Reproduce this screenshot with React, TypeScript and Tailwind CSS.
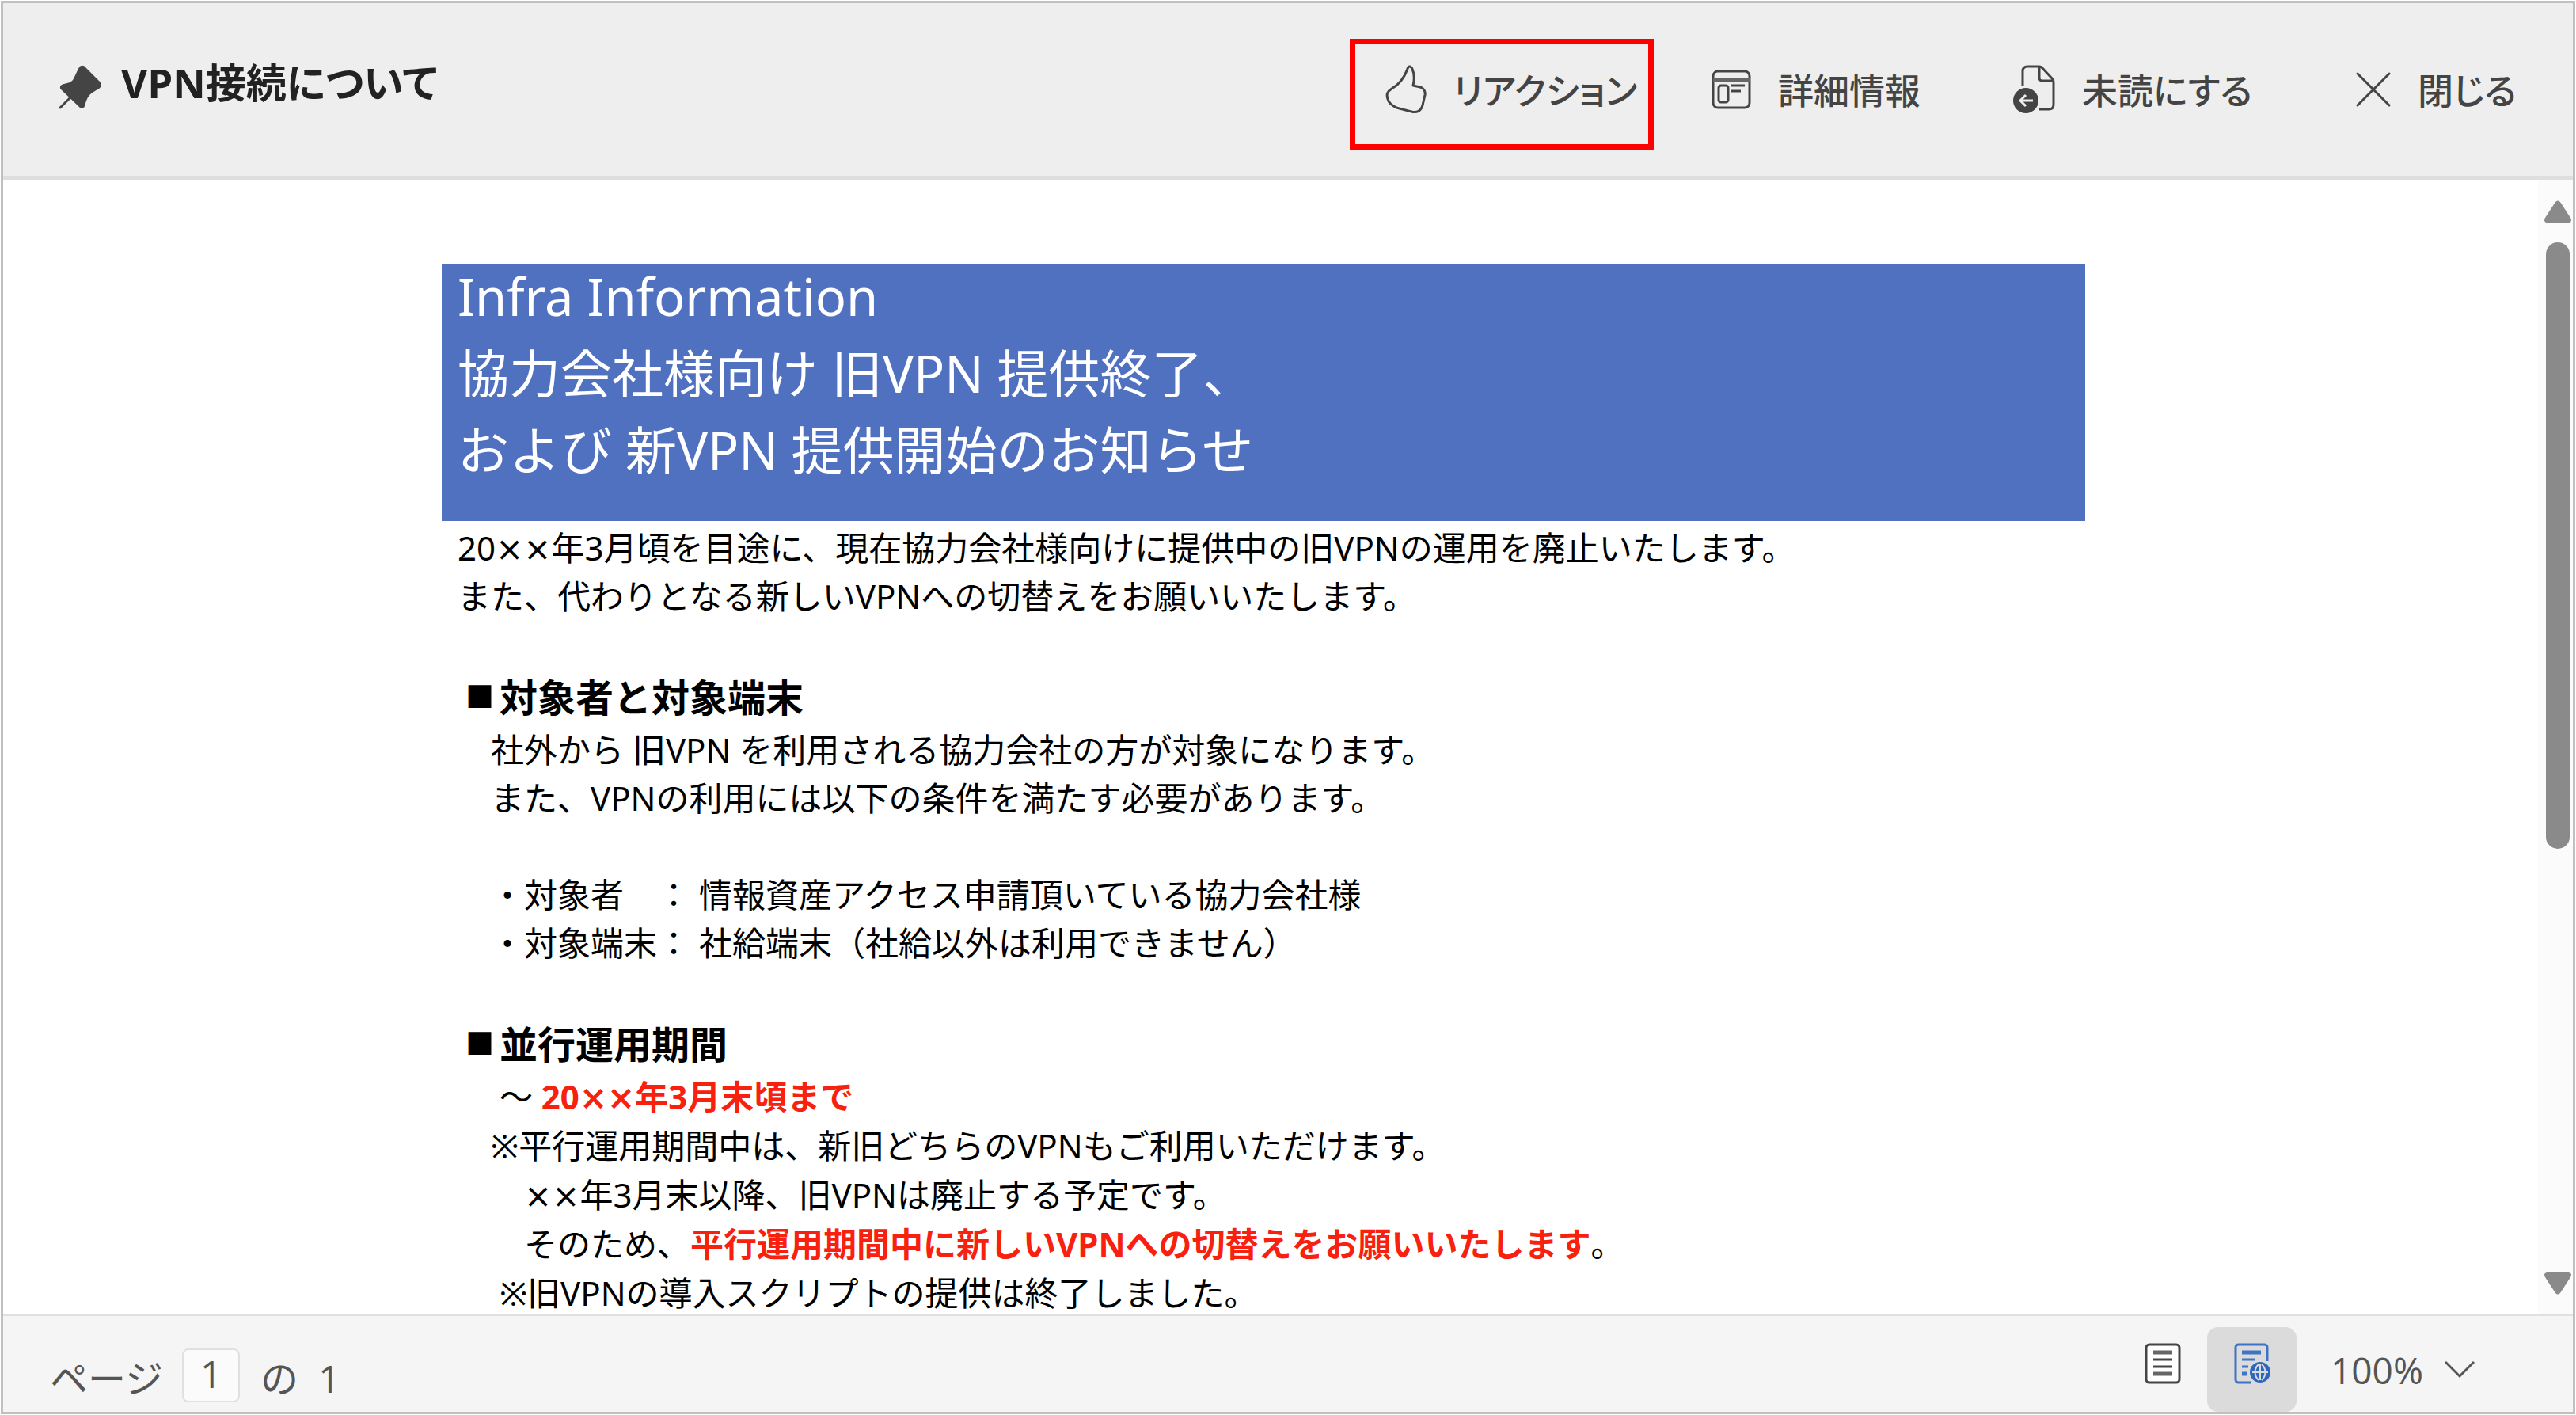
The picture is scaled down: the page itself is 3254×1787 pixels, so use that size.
import { useState } from 'react';
import type { ReactNode } from 'react';

function PinIcon() {
    return (
        <svg className="w-[54px] h-14 shrink-0" viewBox="0 0 54 56" fill="#444444" aria-hidden="true">
            <path d="M25 3c2-3 6-3 8 0l18 18c3 3 2 7-1 9-5 3-11 6-14 11-2 4-3 7-4 11-1 3-5 4-7 1L2 31c-2-2-1-5 1-6 5-2 11-2 14-6 3-5 5-11 8-16z" />
            <path d="M14 41L1 54" stroke="#444444" strokeWidth="3" strokeLinecap="round" />
        </svg>
    );
}

function ThumbIcon() {
    return (
        <svg className="w-[52px] h-[62px] shrink-0" viewBox="0 0 52 62" fill="none" stroke="#444444" strokeWidth="3" strokeLinejoin="round" aria-hidden="true">
            <path d="M28 5c1-4 4-4 6 0 3 7 3 13 1 21l9 2c4 1 7 5 6 10l-3 13c-2 7-7 10-14 8L14 54C8 51 4 48 3 43c-2-6-1-9 5-13 9-5 16-14 20-25z" />
        </svg>
    );
}

function DetailIcon() {
    return (
        <svg className="w-[50px] h-[52px] shrink-0" viewBox="0 0 50 52" fill="none" stroke="#444444" strokeWidth="3" aria-hidden="true">
            <rect x="2" y="3" width="46" height="46" rx="6" />
            <path d="M2 14h46" strokeWidth="5" stroke="#666666" />
            <rect x="9" y="21" width="12" height="21" rx="3" />
            <path d="M25 21h17M25 28h12" />
        </svg>
    );
}

function UnreadIcon() {
    return (
        <svg className="w-[54px] h-[62px] shrink-0" viewBox="0 0 54 62" fill="none" stroke="#444444" strokeWidth="3" aria-hidden="true">
            <path d="M13 27V8c0-4 2-6 6-6h15c2 0 3 1 4 2l12 13c1 1 2 3 2 5v28c0 4-2 6-6 6H34" />
            <path d="M34 3v13c0 3 1 4 4 4h13" />
            <circle cx="17" cy="45" r="16" fill="#444444" stroke="none" />
            <path d="M26 45H11M17 38l-7 7 7 7" stroke="#eeeeee" />
        </svg>
    );
}

function CloseIcon() {
    return (
        <svg className="w-11 h-11 shrink-0" viewBox="0 0 44 44" fill="none" stroke="#444444" strokeWidth="3" strokeLinecap="round" aria-hidden="true">
            <path d="M2 2l40 40M42 2L2 42" />
        </svg>
    );
}

function PageIcon() {
    return (
        <svg className="w-[46px] h-[52px]" viewBox="0 0 46 52" fill="none" stroke="#444444" strokeWidth="3" aria-hidden="true">
            <rect x="2" y="2" width="42" height="48" rx="4" fill="#ffffff" />
            <path d="M11 12h24M11 39h24" strokeWidth="5" stroke="#666666" />
            <path d="M11 21h24M11 30h24" />
        </svg>
    );
}

function WebPageIcon() {
    return (
        <svg className="w-[46px] h-[52px]" viewBox="0 0 46 52" fill="none" stroke="#3f74c4" strokeWidth="3" aria-hidden="true">
            <path d="M22 50H6c-3 0-4-1-4-4V6c0-3 1-4 4-4h32c3 0 4 1 4 4v17" />
            <path d="M10 12h24" strokeWidth="5" />
            <path d="M10 21h16M10 30h8" />
            <path d="M10 39h7" strokeWidth="5" />
            <circle cx="33" cy="37" r="13" fill="#2f66bd" stroke="none" />
            <path d="M23 37h20M33 27v20M31 27c-6 6-6 14 0 20M35 27c6 6 6 14 0 20" stroke="#dbdbdb" strokeWidth="2" />
        </svg>
    );
}

const actions = [
    { label: 'リアクション', icon: <ThumbIcon />, className: 'w-[384px] pl-[38px] border-[7px] border-[#ff0000]' },
    { label: '詳細情報', icon: <DetailIcon />, className: 'w-[334px] pl-[27px]' },
    { label: '未読にする', icon: <UnreadIcon />, className: 'w-[388px] pl-[27px]' },
    { label: '閉じる', icon: <CloseIcon />, className: 'w-[270px] pl-[27px]' },
];

// The multiplication sign is used as a wide placeholder digit
function Xx() {
    return <span className="leading-none font-['DejaVu_Sans',sans-serif]">××</span>;
}

function Heading({ children }: { children: ReactNode }) {
    return (
        <h2 className="flex items-center h-[72px] pl-[30px] text-[48px] font-bold">
            <span className="w-[43px] text-[36px]">■</span>
            {children}
        </h2>
    );
}

function Arrow({ down }: { down?: boolean }) {
    return (
        <svg className="w-[34px] h-7 shrink-0" viewBox="0 0 34 28" fill="#8a8a8a" aria-hidden="true">
            {down ? (
                <path d="M4 0h26c4 0 5 3 3 6L20 26c-2 2-4 2-6 0L1 6C-1 3 0 0 4 0z" />
            ) : (
                <path d="M4 28h26c4 0 5-3 3-6L20 2c-2-2-4-2-6 0L1 22c-2 3-1 6 3 6z" />
            )}
        </svg>
    );
}

export default function App() {
    const [page, setPage] = useState('1');
    const [zoom, setZoom] = useState('100%');

    return (
        <div className="h-screen p-px bg-white font-['Noto_Sans','Noto_Sans_CJK_JP',sans-serif]" lang="ja">
            <div className="h-full flex flex-col border-[3px] border-[#c0c0c0]">
                <header className="flex justify-between h-[223px] shrink-0 pl-[71px] pr-[31px] bg-[#eeeeee] border-b-[5px] border-[#dedede] [font-feature-settings:'palt']">
                    <div className="flex items-center gap-6 h-[200px] text-[#222222]">
                        <div className="pt-3"><PinIcon /></div>
                        <h1 className="text-[51px] leading-[72px] font-bold font-['Open_Sans','Noto_Sans_CJK_JP',sans-serif]">VPN接続について</h1>
                    </div>
                    <nav className="flex items-start gap-[46px] pt-[45px] text-[#444444]">
                        {actions.map(action => (
                            <button
                                key={action.label}
                                className={`flex items-center gap-[34px] h-[140px] pb-3 text-[45px] font-medium whitespace-nowrap ${action.className}`}
                            >
                                {action.icon}
                                <span className="leading-[64px] font-['Noto_Sans_CJK_JP',sans-serif]">{action.label}</span>
                            </button>
                        ))}
                    </nav>
                </header>

                <div className="flex flex-1 min-h-0 bg-white">
                    <main className="flex-1 min-w-0 overflow-hidden pt-[107px] pr-[18px]">
                        <article className="max-w-[2076px] mx-auto text-[42px] leading-[61px] text-black whitespace-pre">
                            <h2 className="flex flex-col justify-center h-[324px] pl-5 pb-[50px] bg-[#5070c0] text-white text-[65px] leading-[97px]">
                                <span>Infra Information</span>
                                <span>協力会社様向け 旧VPN 提供終了、</span>
                                <span>および 新VPN 提供開始のお知らせ</span>
                            </h2>

                            <div className="pt-[3px] pl-5">
                                <p>20<Xx />年3月頃を目途に、現在協力会社様向けに提供中の旧VPNの運用を廃止いたします。</p>
                                <p>また、代わりとなる新しいVPNへの切替えをお願いいたします。</p>
                            </div>

                            <section className="pt-[61px]">
                                <Heading>対象者と対象端末</Heading>
                                <div className="pl-[62px]">
                                    <p>社外から 旧VPN を利用される協力会社の方が対象になります。</p>
                                    <p>また、VPNの利用には以下の条件を満たす必要があります。</p>
                                    <ul className="pt-[61px]">
                                        <li>{'・対象者　： 情報資産アクセス申請頂いている協力会社様'}</li>
                                        <li>{'・対象端末： 社給端末（社給以外は利用できません）'}</li>
                                    </ul>
                                </div>
                            </section>

                            <section className="pt-[61px]">
                                <Heading>並行運用期間</Heading>
                                <div className="pl-[62px] leading-[62px]">
                                    <p>{' 〜 '}<strong className="text-[#f8200f]">20<Xx />年3月末頃まで</strong></p>
                                    <p>※平行運用期間中は、新旧どちらのVPNもご利用いただけます。</p>
                                    <p>{'　'}<Xx />年3月末以降、旧VPNは廃止する予定です。</p>
                                    <p>{'　そのため、'}<strong className="text-[#f8200f]">平行運用期間中に新しいVPNへの切替えをお願いいたします</strong>。</p>
                                    <p>{' ※旧VPNの導入スクリプトの提供は終了しました。'}</p>
                                </div>
                            </section>
                        </article>
                    </main>

                    {/* Scroll bar */}
                    <div className="flex flex-col items-center w-11 shrink-0 pt-[26px] pb-6 pl-[6px] bg-[#fbfbfb]">
                        <Arrow />
                        <div className="flex-1 w-[30px] my-[25px]">
                            <div className="h-[60%] rounded-full bg-[#8a8a8a]" />
                        </div>
                        <Arrow down />
                    </div>
                </div>

                <footer className="flex justify-between h-[124px] shrink-0 pl-[59px] pr-[124px] bg-[#f5f5f5] border-t-[3px] border-[#e0e0e0] text-[48px] leading-[68px] text-[#555555] font-['Open_Sans','Noto_Sans_CJK_JP',sans-serif]">
                    <div className="flex items-start pt-[41px]">
                        <label htmlFor="page" className="pt-1 mr-[24px]">ページ</label>
                        <input
                            id="page"
                            value={page}
                            onChange={e => setPage(e.target.value)}
                            className="w-[73px] h-[68px] mr-[26px] pb-1 rounded-lg border-2 border-[#e0e0e0] bg-[#fbfbfb] text-center"
                        />
                        <span className="pt-1 whitespace-pre">の  1</span>
                    </div>
                    <div className="flex items-start pt-[14px]">
                        <button className="flex justify-center w-[113px] h-[107px] pt-5" aria-label="ページ表示">
                            <PageIcon />
                        </button>
                        <button className="flex justify-center w-[113px] h-[107px] pt-5 rounded-[14px] bg-[#dbdbdb]" aria-label="Web表示">
                            <WebPageIcon />
                        </button>
                        <div className="flex items-center pt-5 pl-[43px]">
                            <select
                                value={zoom}
                                onChange={e => setZoom(e.target.value)}
                                aria-label="ズーム"
                                className="appearance-none bg-transparent w-[144px] text-[46px]"
                            >
                                <option>100%</option>
                                <option>150%</option>
                            </select>
                            <svg className="w-[38px] h-6" viewBox="0 0 38 24" fill="none" stroke="#555555" strokeWidth="3" aria-hidden="true">
                                <path d="M1 2l18 18L37 2" />
                            </svg>
                        </div>
                    </div>
                </footer>
            </div>
        </div>
    );
}
